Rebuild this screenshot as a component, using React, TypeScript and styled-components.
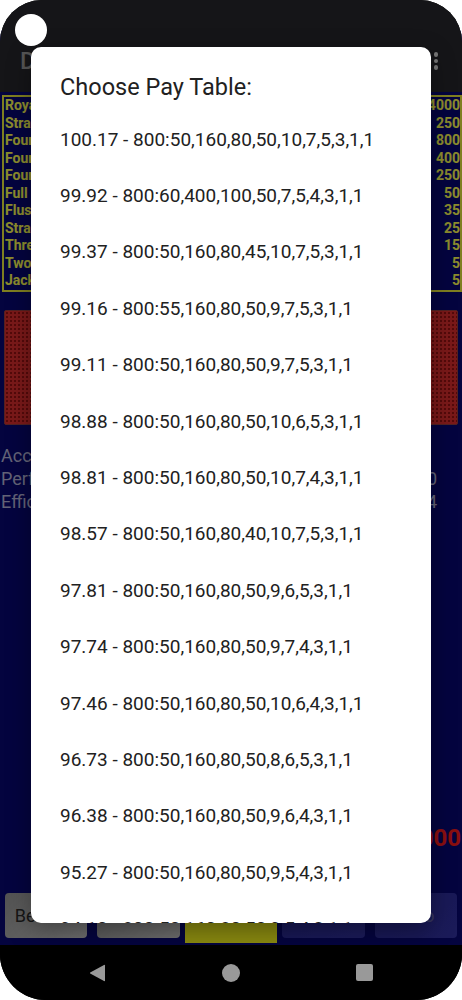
import React from "react";
import styled, { createGlobalStyle } from "styled-components";

const GlobalStyle = createGlobalStyle`
  html, body { margin: 0; padding: 0; background: #ffffff; }
  body { font-family: Roboto, "Noto Sans", Arial, sans-serif; }
  #root { width: 462px; height: 1000px; }
`;

const Frame = styled.div`
  position: relative;
  width: 462px;
  height: 1000px;
  background: #000;
  border-radius: 42px 42px 46px 46px;
  overflow: hidden;
  display: flex;
  flex-direction: column;
`;

const StatusBar = styled.div`
  height: 30px;
  flex-shrink: 0;
  background: #242428;
`;

const Screen = styled.main`
  flex: 1;
  min-height: 0;
  display: flex;
  flex-direction: column;
  background: #08086a;
  padding-bottom: 2px;
`;

const AppBar = styled.header`
  height: 62px;
  flex-shrink: 0;
  box-sizing: border-box;
  background: #242428;
  display: flex;
  align-items: center;
  justify-content: space-between;
  padding: 0 24px 0 20px;
`;

const AppTitle = styled.h1`
  margin: 0;
  font-size: 24px;
  font-weight: 500;
  color: #8e8e8e;
  white-space: nowrap;
`;

const OverflowMenu = styled.div`
  display: flex;
  flex-direction: column;
  gap: 2px;
`;

const MenuDot = styled.span`
  width: 4.5px;
  height: 4.5px;
  border-radius: 50%;
  background: #c6c6c6;
`;

const PayTable = styled.div`
  margin: 3px 0 0 2px;
  border: 2px solid #d4d436;
  display: flex;
  flex-direction: column;
`;

const PayRow = styled.div`
  display: grid;
  grid-template-columns: 1fr repeat(5, 64px);
  height: 17.5px;
  line-height: 17.5px;
  align-items: center;
  font-size: 14px;
  font-weight: 700;
  color: #eaea4c;
`;

const HandName = styled.span`
  padding-left: 1px;
  white-space: nowrap;
  overflow: hidden;
`;

const PayValue = styled.span`
  text-align: right;
`;

const CardRow = styled.div`
  display: flex;
  gap: 8px;
  padding: 0 4px;
  margin-top: 18.5px;
  height: 115px;
  flex-shrink: 0;
`;

const CardBack = styled.div`
  flex: 1;
  box-sizing: border-box;
  border: 1px solid #8a3a3a;
  border-radius: 2px;
  background-color: #cc2a2a;
  background-image: radial-gradient(circle, #8c1212 0.8px, transparent 1.3px);
  background-size: 4px 4px;
`;

const Stats = styled.div`
  margin-top: 19px;
  display: flex;
  flex-direction: column;
  padding: 0 25px 0 1px;
`;

const StatLine = styled.div`
  display: flex;
  justify-content: space-between;
  font-size: 18px;
  line-height: 23px;
  color: #a6a6c6;
`;

const CreditRow = styled.div`
  margin-top: auto;
  display: flex;
  justify-content: flex-end;
  padding-right: 1px;
  font-size: 24px;
  font-weight: 700;
  line-height: 28px;
  color: #e61a1a;
`;

const ButtonBar = styled.div`
  margin-top: 36px;
  height: 55px;
  flex-shrink: 0;
  display: grid;
  grid-template-columns: repeat(5, 1fr);
`;

type Variant = "gray" | "active" | "disabled";

const GameButton = styled.button<{ $variant: Variant }>`
  margin: ${(p) => (p.$variant === "active" ? "0" : "5px")};
  border: none;
  border-radius: ${(p) => (p.$variant === "active" ? "0" : "4px")};
  font-family: Roboto, "Noto Sans", Arial, sans-serif;
  font-size: 18px;
  font-weight: ${(p) => (p.$variant === "active" ? 700 : 400)};
  white-space: nowrap;
  overflow: hidden;
  padding: 0;
  color: ${(p) =>
    p.$variant === "active" ? "#d81818" : p.$variant === "gray" ? "#262626" : "#5a5a9a"};
  background: ${(p) =>
    p.$variant === "active"
      ? "#e6e61c"
      : p.$variant === "gray"
      ? "linear-gradient(135deg, #8a8a8a, #b8b8b8)"
      : "linear-gradient(135deg, #25258a, #2e2e96)"};
`;

const NavBar = styled.nav`
  height: 55px;
  flex-shrink: 0;
  background: #000;
  display: flex;
  align-items: center;
  justify-content: center;
  gap: 116px;
`;

const NavHome = styled.span`
  width: 18px;
  height: 18px;
  border-radius: 50%;
  background: #ffffff;
`;

const NavRecents = styled.span`
  width: 17px;
  height: 17px;
  border-radius: 2px;
  background: #ffffff;
`;

const Scrim = styled.div`
  position: absolute;
  inset: 0;
  background: rgba(0, 0, 0, 0.4);
  z-index: 1;
`;

const Dialog = styled.div`
  position: absolute;
  top: 47px;
  left: 31px;
  width: 400px;
  height: 876px;
  background: #ffffff;
  border-radius: 10px;
  overflow: hidden;
  z-index: 2;
  box-shadow: 0 8px 24px rgba(0, 0, 0, 0.35);
`;

const DialogTitle = styled.h2`
  margin: 0;
  padding: 24px 29px 0;
  font-size: 23.5px;
  font-weight: 400;
  line-height: 32px;
  color: #212121;
`;

const OptionList = styled.ul`
  list-style: none;
  margin: 8px 0 0;
  padding: 0;
`;

const Option = styled.li`
  height: 56.4px;
  display: flex;
  align-items: center;
  padding: 0 29px;
  font-size: 19px;
  color: #212121;
  white-space: nowrap;
`;

const TouchDot = styled.div`
  position: absolute;
  top: 14px;
  left: 15px;
  width: 32px;
  height: 32px;
  border-radius: 50%;
  background: #ffffff;
  z-index: 3;
`;

const hands: [string, number[]][] = [
  ["Royal Flush", [250, 500, 750, 1000, 4000]],
  ["Straight Flush", [50, 100, 150, 200, 250]],
  ["Four Aces", [160, 320, 480, 640, 800]],
  ["Four 2-4", [80, 160, 240, 320, 400]],
  ["Four 5-K", [50, 100, 150, 200, 250]],
  ["Full House", [10, 20, 30, 40, 50]],
  ["Flush", [7, 14, 21, 28, 35]],
  ["Straight", [5, 10, 15, 20, 25]],
  ["Three of a Kind", [3, 6, 9, 12, 15]],
  ["Two Pair", [1, 2, 3, 4, 5]],
  ["Jacks or Better", [1, 2, 3, 4, 5]],
];

const options = [
  "100.17 - 800:50,160,80,50,10,7,5,3,1,1",
  "99.92 - 800:60,400,100,50,7,5,4,3,1,1",
  "99.37 - 800:50,160,80,45,10,7,5,3,1,1",
  "99.16 - 800:55,160,80,50,9,7,5,3,1,1",
  "99.11 - 800:50,160,80,50,9,7,5,3,1,1",
  "98.88 - 800:50,160,80,50,10,6,5,3,1,1",
  "98.81 - 800:50,160,80,50,10,7,4,3,1,1",
  "98.57 - 800:50,160,80,40,10,7,5,3,1,1",
  "97.81 - 800:50,160,80,50,9,6,5,3,1,1",
  "97.74 - 800:50,160,80,50,9,7,4,3,1,1",
  "97.46 - 800:50,160,80,50,10,6,4,3,1,1",
  "96.73 - 800:50,160,80,50,8,6,5,3,1,1",
  "96.38 - 800:50,160,80,50,9,6,4,3,1,1",
  "95.27 - 800:50,160,80,50,9,5,4,3,1,1",
  "94.10 - 800:50,160,80,50,9,5,4,2,1,1",
];

const buttons: [string, Variant][] = [
  ["Bet One", "gray"],
  ["Bet Max", "gray"],
  ["DEAL", "active"],
  ["Hint", "disabled"],
  ["Auto", "disabled"],
];

export default function App() {
  return (
    <>
      <GlobalStyle />
      <Frame>
        <StatusBar />
        <Screen>
          <AppBar>
            <AppTitle>Double Bonus Poker</AppTitle>
            <OverflowMenu>
              <MenuDot />
              <MenuDot />
              <MenuDot />
            </OverflowMenu>
          </AppBar>
          <PayTable>
            {hands.map(([name, pays]) => (
              <PayRow key={name}>
                <HandName>{name}</HandName>
                {pays.map((v, i) => (
                  <PayValue key={i}>{v}</PayValue>
                ))}
              </PayRow>
            ))}
          </PayTable>
          <CardRow>
            {[0, 1, 2, 3, 4].map((i) => (
              <CardBack key={i} />
            ))}
          </CardRow>
          <Stats>
            <StatLine>
              <span>Accuracy:</span>
              <span></span>
            </StatLine>
            <StatLine>
              <span>Perfect Hands:</span>
              <span>0</span>
            </StatLine>
            <StatLine>
              <span>Efficiency:</span>
              <span>0.004</span>
            </StatLine>
          </Stats>
          <CreditRow>Credits: 1000</CreditRow>
          <ButtonBar>
            {buttons.map(([label, v]) => (
              <GameButton key={label} $variant={v}>
                {label}
              </GameButton>
            ))}
          </ButtonBar>
        </Screen>
        <NavBar>
          <svg width="17" height="18" viewBox="0 0 17 18">
            <path d="M16 1.5 L16 16.5 Q16 17.5 15 17 L1.2 9.6 Q0.5 9 1.2 8.4 L15 1 Q16 0.5 16 1.5 Z" fill="#ffffff" />
          </svg>
          <NavHome />
          <NavRecents />
        </NavBar>
        <Scrim />
        <Dialog>
          <DialogTitle>Choose Pay Table:</DialogTitle>
          <OptionList>
            {options.map((o) => (
              <Option key={o}>{o}</Option>
            ))}
          </OptionList>
        </Dialog>
        <TouchDot />
      </Frame>
    </>
  );
}
